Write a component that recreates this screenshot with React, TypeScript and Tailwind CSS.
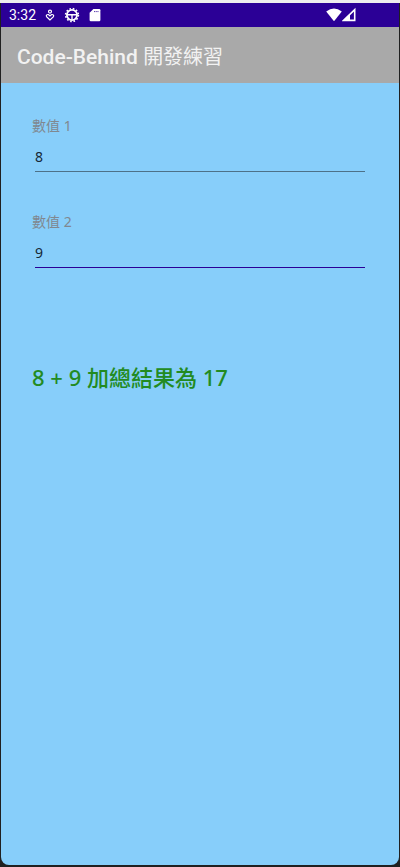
import { useState } from "react";

function StatusBar() {
  return (
    <div className="flex h-6 items-center bg-[#2b0096] pr-[43px] pl-2 text-white">
      <span className="w-[35px] text-sm">3:32</span>
      <svg className="h-3 w-3" viewBox="0 0 12 12" fill="none" stroke="currentColor" strokeWidth="1.2" aria-hidden="true">
        <circle cx="6" cy="2.6" r="1.5" />
        <path d="M6 11L2.5 7.6C1.8 6.2 3.2 5.2 4.4 5.6L6 7L7.6 5.6C8.8 5.2 10.2 6.2 9.5 7.6Z" />
      </svg>
      <svg className="ml-2 h-4 w-4" viewBox="0 0 16 16" fill="none" stroke="currentColor" aria-hidden="true">
        <circle cx="8" cy="8" r="5.1" strokeWidth="1.8" />
        <circle cx="8" cy="8" r="6.4" strokeWidth="1.6" strokeDasharray="1.6 1.75" />
        <path d="M3 7.8H13M8 7.8V13" strokeWidth="1.4" />
      </svg>
      <svg className="ml-2 h-4 w-4" viewBox="0 0 16 16" fill="currentColor" aria-hidden="true">
        <path d="M5.4 2H11.2Q12.4 2 12.4 3.2V13Q12.4 14.2 11.2 14.2H2.8Q1.6 14.2 1.6 13V5.8Z" />
        <path d="M6 4.6H10.6" stroke="#2b0096" strokeWidth="0.8" strokeDasharray="1.1 0.6" />
      </svg>
      <svg className="ml-auto h-4 w-4" viewBox="0 0 16 16" fill="currentColor" aria-hidden="true">
        <path d="M0.2 4.6Q8 -1.4 15.8 4.6L8 14.2Z" />
      </svg>
      <svg className="h-4 w-3.5" viewBox="0 0 14 16" fill="none" aria-hidden="true">
        <path d="M1.6 13.4H12.7V2.6Z" stroke="currentColor" strokeWidth="1.6" />
        <path d="M1.4 13.6L8 7V13.6Z" fill="currentColor" />
      </svg>
    </div>
  );
}

type FieldProps = {
  id: string;
  label: string;
  value: string;
  active?: boolean;
  onChange: (value: string) => void;
};

function Field({ id, label, value, active = false, onChange }: FieldProps) {
  return (
    <div className="flex flex-col">
      <label htmlFor={id} className="text-sm leading-5 text-[#808890]">
        {label}
      </label>
      <input
        id={id}
        inputMode="numeric"
        value={value}
        onChange={(event) => onChange(event.target.value)}
        className={`mt-2 mr-1 ml-[3px] h-7 border-b bg-transparent pb-0.5 text-sm text-[#152836] outline-none ${
          active ? "border-[#2b0096]" : "border-[#4d7188]"
        }`}
      />
    </div>
  );
}

export default function App() {
  const [first, setFirst] = useState("8");
  const [second, setSecond] = useState("9");

  return (
    <div className="flex min-h-screen flex-col bg-[#202020] px-px pb-0.5 font-[Roboto,'Noto_Sans_CJK_TC',sans-serif]">
      <div className="-mx-px h-[3px] bg-[#eeeeee]" />
      <div className="flex grow flex-col overflow-hidden rounded-b-lg bg-[#87cefa]">
        <StatusBar />
        <header className="flex h-14 items-center bg-[#a9a9a9] px-4 pt-1">
          <h1 className="text-[21px] leading-7 font-medium text-[#f2f2f2]">
            Code-Behind <span className="text-xl font-normal">開發練習</span>
          </h1>
        </header>
        <main className="flex flex-col pt-[33px] pr-[30px] pl-[31px] font-['Noto_Sans','Noto_Sans_CJK_TC',sans-serif]">
          <div className="flex flex-col gap-10">
            <Field id="value-1" label="數值 1" value={first} onChange={setFirst} />
            <Field id="value-2" label="數值 2" value={second} onChange={setSecond} active />
          </div>
          <output htmlFor="value-1 value-2" className="mt-[93px] text-[22px] leading-8 font-medium text-[#228b22]">
            {first} + {second} 加總結果為 {Number(first) + Number(second)}
          </output>
        </main>
      </div>
    </div>
  );
}
